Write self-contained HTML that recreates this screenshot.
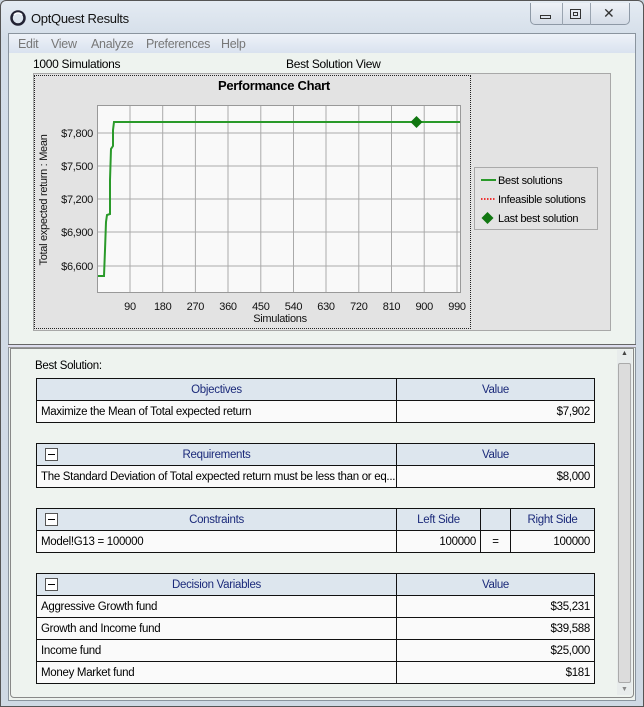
<!DOCTYPE html>
<html><head><style>
*{margin:0;padding:0;box-sizing:border-box}
body{width:644px;height:707px;background:#c9d3dd;font-family:"Liberation Sans",sans-serif;font-size:12px;position:relative;overflow:hidden;letter-spacing:-0.3px}
.a{position:absolute}
.tb{left:0;top:0;width:644px;height:707px;border:1px solid #555;border-radius:6px 6px 0 0;background:linear-gradient(#e4ebf3,#d3dde8 40px,#cfd9e4)}
.content{left:8px;top:33px;width:628px;height:668px;background:#eef3ef;border:1px solid #8a949e}
.menu{left:9px;top:34px;width:626px;height:19px;background:linear-gradient(#eef2f8,#d9e2ef);color:#777;font-size:12.5px}
.menu span{position:absolute;top:3px}
table{position:absolute;border-collapse:collapse;left:36px;width:559px;font-size:11.5px;table-layout:fixed}
td{border:1px solid #111;height:22px;padding:1px 4px 0;background:#fafafa;white-space:nowrap;overflow:hidden}
td.h{background:#dde6ee;color:#1b2a7a;text-align:center;position:relative}
td.r{text-align:right}
.mn{position:absolute;left:8px;top:4px;width:13px;height:13px;border:1px solid #555;background:#fff}
.mn:after{content:"";position:absolute;left:2px;top:5px;width:7px;height:1px;background:#000}
</style></head><body>
<div class="a tb"></div>
<svg class="a" style="left:10px;top:10px" width="18" height="18"><circle cx="8" cy="8" r="6.5" fill="none" stroke="#223" stroke-width="2.5"/><path d="M4 5 A5 5 0 0 1 12 5" stroke="#fff" stroke-width="1.5" fill="none"/></svg>
<div class="a" style="left:31px;top:11px;font-size:13px;color:#111">OptQuest Results</div>
<div class="a" style="left:530px;top:3px;width:100px;height:22px;border:1px solid #8e99a6;border-top:none;border-radius:0 0 5px 5px;background:linear-gradient(#eef2f7,#d5dde7)"></div>
<div class="a" style="left:562px;top:3px;width:1px;height:22px;background:#9aa4b0"></div>
<div class="a" style="left:590px;top:3px;width:1px;height:22px;background:#9aa4b0"></div>
<div class="a" style="left:540px;top:15px;width:11px;height:4px;border:1px solid #333"></div>
<div class="a" style="left:570px;top:9px;width:11px;height:10px;border:1px solid #333"><div style="margin:2px;height:4px;border:1px solid #333"></div></div>
<div class="a" style="left:603px;top:5px;font-size:14px;color:#333">✕</div>
<div class="a content"></div>
<div class="a menu"><span style="left:9px">Edit</span><span style="left:42px">View</span><span style="left:82px">Analyze</span><span style="left:137px">Preferences</span><span style="left:212px">Help</span></div>
<div class="a" style="left:33px;top:57px">1000 Simulations</div>
<div class="a" style="left:286px;top:57px">Best Solution View</div>
<div class="a" style="left:33px;top:73px;width:578px;height:258px;background:#e3e3e3;border:1px solid #a8a8a8"></div>
<div class="a" style="left:34px;top:75px;width:437px;height:254px;border:1px dotted #222"></div>
<div class="a" style="left:218px;top:78px;font-weight:bold;font-size:13px">Performance Chart</div>
<svg class="a" style="left:0;top:0" width="644" height="340" font-family="Liberation Sans" font-size="11">
<rect x="97.5" y="105.5" width="363" height="187" fill="#f9f9f9" stroke="#999"/>
<g stroke="#aaa">
<line x1="130" y1="106" x2="130" y2="292"/><line x1="162.7" y1="106" x2="162.7" y2="292"/><line x1="195.4" y1="106" x2="195.4" y2="292"/><line x1="228" y1="106" x2="228" y2="292"/><line x1="260.8" y1="106" x2="260.8" y2="292"/><line x1="293.5" y1="106" x2="293.5" y2="292"/><line x1="326" y1="106" x2="326" y2="292"/><line x1="358.8" y1="106" x2="358.8" y2="292"/><line x1="391.5" y1="106" x2="391.5" y2="292"/><line x1="424.2" y1="106" x2="424.2" y2="292"/><line x1="457" y1="106" x2="457" y2="292"/>
<line x1="98" y1="133" x2="460" y2="133"/><line x1="98" y1="166" x2="460" y2="166"/><line x1="98" y1="199" x2="460" y2="199"/><line x1="98" y1="232" x2="460" y2="232"/><line x1="98" y1="266" x2="460" y2="266"/>
</g>
<polyline fill="none" stroke="#2a9a2a" stroke-width="2" points="98,276 104,276 105,250 106,222 107,215 110,214 110,180 111,149 113,146 113,130 114,122 460,122"/>
<path d="M416.5 116 L422.5 122 L416.5 128 L410.5 122Z" fill="#117711"/>
<g text-anchor="end" fill="#111"><text x="93" y="137">$7,800</text><text x="93" y="170">$7,500</text><text x="93" y="203">$7,200</text><text x="93" y="236">$6,900</text><text x="93" y="270">$6,600</text></g>
<g text-anchor="middle" fill="#111"><text x="130" y="310">90</text><text x="162.7" y="310">180</text><text x="195.4" y="310">270</text><text x="228" y="310">360</text><text x="260.8" y="310">450</text><text x="293.5" y="310">540</text><text x="326" y="310">630</text><text x="358.8" y="310">720</text><text x="391.5" y="310">810</text><text x="424.2" y="310">900</text><text x="457" y="310">990</text><text x="280" y="322">Simulations</text></g>
<text transform="translate(47,200) rotate(-90)" text-anchor="middle" fill="#111">Total expected return : Mean</text>
<rect x="474.5" y="167.5" width="123" height="62" fill="#e3e3e3" stroke="#aaa"/>
<line x1="481" y1="180" x2="496" y2="180" stroke="#2a9a2a" stroke-width="2"/><text x="498" y="184">Best solutions</text>
<line x1="481" y1="199" x2="496" y2="199" stroke="#e33" stroke-width="2" stroke-dasharray="1.5 1.5"/><text x="498" y="203">Infeasible solutions</text>
<path d="M487.5 212 L493.5 218 L487.5 224 L481.5 218Z" fill="#117711"/><text x="498" y="222">Last best solution</text>
</svg>
<div class="a" style="left:8px;top:344px;width:628px;height:4px;border-top:1px solid #666;border-bottom:1px solid #999;background:#dde"></div>
<div class="a" style="left:10px;top:348px;width:624px;height:350px;border:1px solid #888;border-radius:0 0 4px 4px"></div>
<div class="a" style="left:617px;top:350px;width:15px;height:345px;background:#e8ecec"></div>
<div class="a" style="left:618px;top:363px;width:13px;height:320px;background:#dcdcdc;border:1px solid #aaa;border-radius:2px"></div>
<div class="a" style="left:621px;top:350px;font-size:7px;color:#444">▲</div>
<div class="a" style="left:621px;top:686px;font-size:7px;color:#888">▼</div>
<div class="a" style="left:35px;top:360px;font-size:11.5px">Best Solution:</div>
<table style="top:378px"><colgroup><col style="width:360px"><col></colgroup><tr><td class="h">Objectives</td><td class="h">Value</td></tr><tr><td>Maximize the Mean of Total expected return</td><td class="r">$7,902</td></tr></table>
<table style="top:443px"><colgroup><col style="width:360px"><col></colgroup><tr><td class="h"><span class="mn"></span>Requirements</td><td class="h">Value</td></tr><tr><td>The Standard Deviation of Total expected return must be less than or eq...</td><td class="r">$8,000</td></tr></table>
<table style="top:508px"><colgroup><col style="width:360px"><col style="width:84px"><col style="width:30px"><col></colgroup><tr><td class="h"><span class="mn"></span>Constraints</td><td class="h">Left Side</td><td class="h"></td><td class="h">Right Side</td></tr><tr><td>Model!G13 = 100000</td><td class="r">100000</td><td style="text-align:center">=</td><td class="r">100000</td></tr></table>
<table style="top:573px"><colgroup><col style="width:360px"><col></colgroup><tr><td class="h"><span class="mn"></span>Decision Variables</td><td class="h">Value</td></tr>
<tr><td>Aggressive Growth fund</td><td class="r">$35,231</td></tr>
<tr><td>Growth and Income fund</td><td class="r">$39,588</td></tr>
<tr><td>Income fund</td><td class="r">$25,000</td></tr>
<tr><td>Money Market fund</td><td class="r">$181</td></tr></table>
</body></html>
